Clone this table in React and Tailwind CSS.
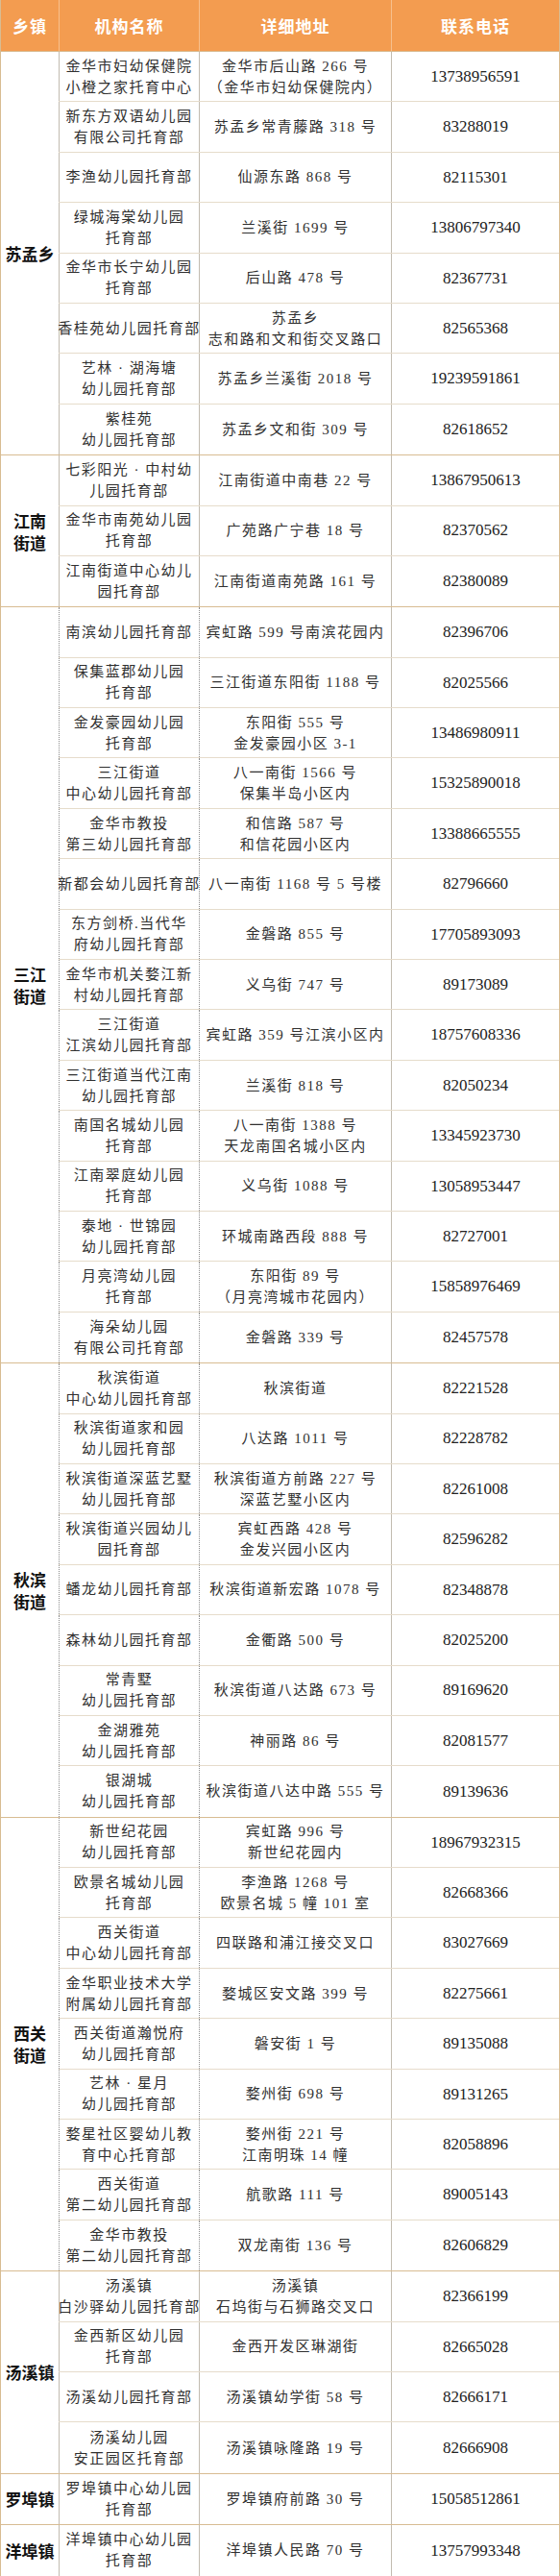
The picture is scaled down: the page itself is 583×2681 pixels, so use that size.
import React from "react";

const groups = [
  {
    town: ["苏孟乡"],
    dotted: false,
    rows: [
      [["金华市妇幼保健院", "小橙之家托育中心"], ["金华市后山路 266 号", "（金华市妇幼保健院内）"], "13738956591"],
      [["新东方双语幼儿园", "有限公司托育部"], ["苏孟乡常青藤路 318 号"], "83288019"],
      [["李渔幼儿园托育部"], ["仙源东路 868 号"], "82115301"],
      [["绿城海棠幼儿园", "托育部"], ["兰溪街 1699 号"], "13806797340"],
      [["金华市长宁幼儿园", "托育部"], ["后山路 478 号"], "82367731"],
      [["香桂苑幼儿园托育部"], ["苏孟乡", "志和路和文和街交叉路口"], "82565368"],
      [["艺林 · 湖海塘", "幼儿园托育部"], ["苏孟乡兰溪街 2018 号"], "19239591861"],
      [["紫桂苑", "幼儿园托育部"], ["苏孟乡文和街 309 号"], "82618652"],
    ],
  },
  {
    town: ["江南", "街道"],
    dotted: false,
    rows: [
      [["七彩阳光 · 中村幼", "儿园托育部"], ["江南街道中南巷 22 号"], "13867950613"],
      [["金华市南苑幼儿园", "托育部"], ["广苑路广宁巷 18 号"], "82370562"],
      [["江南街道中心幼儿", "园托育部"], ["江南街道南苑路 161 号"], "82380089"],
    ],
  },
  {
    town: ["三江", "街道"],
    dotted: true,
    rows: [
      [["南滨幼儿园托育部"], ["宾虹路 599 号南滨花园内"], "82396706"],
      [["保集蓝郡幼儿园", "托育部"], ["三江街道东阳街 1188 号"], "82025566"],
      [["金发豪园幼儿园", "托育部"], ["东阳街 555 号", "金发豪园小区 3-1"], "13486980911"],
      [["三江街道", "中心幼儿园托育部"], ["八一南街 1566 号", "保集半岛小区内"], "15325890018"],
      [["金华市教投", "第三幼儿园托育部"], ["和信路 587 号", "和信花园小区内"], "13388665555"],
      [["新都会幼儿园托育部"], ["八一南街 1168 号 5 号楼"], "82796660"],
      [["东方剑桥.当代华", "府幼儿园托育部"], ["金磐路 855 号"], "17705893093"],
      [["金华市机关婺江新", "村幼儿园托育部"], ["义乌街 747 号"], "89173089"],
      [["三江街道", "江滨幼儿园托育部"], ["宾虹路 359 号江滨小区内"], "18757608336"],
      [["三江街道当代江南", "幼儿园托育部"], ["兰溪街 818 号"], "82050234"],
      [["南国名城幼儿园", "托育部"], ["八一南街 1388 号", "天龙南国名城小区内"], "13345923730"],
      [["江南翠庭幼儿园", "托育部"], ["义乌街 1088 号"], "13058953447"],
      [["泰地 · 世锦园", "幼儿园托育部"], ["环城南路西段 888 号"], "82727001"],
      [["月亮湾幼儿园", "托育部"], ["东阳街 89 号", "（月亮湾城市花园内）"], "15858976469"],
      [["海朵幼儿园", "有限公司托育部"], ["金磐路 339 号"], "82457578"],
    ],
  },
  {
    town: ["秋滨", "街道"],
    dotted: true,
    rows: [
      [["秋滨街道", "中心幼儿园托育部"], ["秋滨街道"], "82221528"],
      [["秋滨街道家和园", "幼儿园托育部"], ["八达路 1011 号"], "82228782"],
      [["秋滨街道深蓝艺墅", "幼儿园托育部"], ["秋滨街道方前路 227 号", "深蓝艺墅小区内"], "82261008"],
      [["秋滨街道兴园幼儿", "园托育部"], ["宾虹西路 428 号", "金发兴园小区内"], "82596282"],
      [["蟠龙幼儿园托育部"], ["秋滨街道新宏路 1078 号"], "82348878"],
      [["森林幼儿园托育部"], ["金衢路 500 号"], "82025200"],
      [["常青墅", "幼儿园托育部"], ["秋滨街道八达路 673 号"], "89169620"],
      [["金湖雅苑", "幼儿园托育部"], ["神丽路 86 号"], "82081577"],
      [["银湖城", "幼儿园托育部"], ["秋滨街道八达中路 555 号"], "89139636"],
    ],
  },
  {
    town: ["西关", "街道"],
    dotted: true,
    rows: [
      [["新世纪花园", "幼儿园托育部"], ["宾虹路 996 号", "新世纪花园内"], "18967932315"],
      [["欧景名城幼儿园", "托育部"], ["李渔路 1268 号", "欧景名城 5 幢 101 室"], "82668366"],
      [["西关街道", "中心幼儿园托育部"], ["四联路和浦江接交叉口"], "83027669"],
      [["金华职业技术大学", "附属幼儿园托育部"], ["婺城区安文路 399 号"], "82275661"],
      [["西关街道瀚悦府", "幼儿园托育部"], ["磐安街 1 号"], "89135088"],
      [["艺林 · 星月", "幼儿园托育部"], ["婺州街 698 号"], "89131265"],
      [["婺星社区婴幼儿教", "育中心托育部"], ["婺州街 221 号", "江南明珠 14 幢"], "82058896"],
      [["西关街道", "第二幼儿园托育部"], ["航歌路 111 号"], "89005143"],
      [["金华市教投", "第二幼儿园托育部"], ["双龙南街 136 号"], "82606829"],
    ],
  },
  {
    town: ["汤溪镇"],
    dotted: false,
    rows: [
      [["汤溪镇", "白沙驿幼儿园托育部"], ["汤溪镇", "石坞街与石狮路交叉口"], "82366199"],
      [["金西新区幼儿园", "托育部"], ["金西开发区琳湖街"], "82665028"],
      [["汤溪幼儿园托育部"], ["汤溪镇幼学街 58 号"], "82666171"],
      [["汤溪幼儿园", "安正园区托育部"], ["汤溪镇咏隆路 19 号"], "82666908"],
    ],
  },
  {
    town: ["罗埠镇"],
    dotted: false,
    rows: [[["罗埠镇中心幼儿园", "托育部"], ["罗埠镇府前路 30 号"], "15058512861"]],
  },
  {
    town: ["洋埠镇"],
    dotted: false,
    rows: [[["洋埠镇中心幼儿园", "托育部"], ["洋埠镇人民路 70 号"], "13757993348"]],
  },
];

function Lines({ lines }) {
  return (
    <div className="flex flex-col items-center leading-[22px]">
      {lines.map((l, i) => (
        <span key={i} className="whitespace-nowrap">
          {l}
        </span>
      ))}
    </div>
  );
}

function Row({ row, dotted, last }) {
  const [name, addr, phone] = row;
  const vline = dotted
    ? "border-l border-dotted border-[#8c8c8c]"
    : "border-l border-[#c2bbb0]";
  return (
    <div
      className={`grid grid-cols-[146px_200px_1fr] h-[52.4px] ${
        last ? "" : "border-b border-[#e6dccb]"
      }`}
    >
      <div className={`flex items-center justify-center ${vline}`}>
        <Lines lines={name} />
      </div>
      <div className={`flex items-center justify-center ${vline}`}>
        <Lines lines={addr} />
      </div>
      <div className="flex items-center justify-center border-l border-[#c2bbb0] text-[17px] tracking-normal text-[#222]">
        {phone}
      </div>
    </div>
  );
}

export default function App() {
  const heads = ["乡镇", "机构名称", "详细地址", "联系电话"];
  return (
    <div className="w-[583px] bg-white">
      <div className="border-x border-b border-[#d8bc92]">
        {/* header */}
        <div className="grid grid-cols-[60px_146px_200px_1fr] h-[53px] bg-[#f39c50] text-white font-bold text-[17px] font-[Noto_Sans_CJK_SC,sans-serif]">
          {heads.map((h, i) => (
            <div
              key={h}
              className={`flex items-center justify-center tracking-[1px] ${
                i > 0 ? "border-l border-[#f7c08d]" : ""
              }`}
            >
              {h}
            </div>
          ))}
        </div>

        {groups.map((g) => (
          <div key={g.town.join("")} className="flex border-t border-[#d8bc92]">
            <div className="w-[60px] shrink-0 flex flex-col items-center justify-center font-bold text-[17px] leading-[23px] text-[#111] font-[Noto_Sans_CJK_SC,sans-serif]">
              {g.town.map((t) => (
                <span key={t}>{t}</span>
              ))}
            </div>
            <div className="flex-1 flex flex-col text-[15px] tracking-[1.5px] text-[#303030] font-[Liberation_Serif,Noto_Sans_CJK_SC,serif]">
              {g.rows.map((r, i) => (
                <Row key={i} row={r} dotted={g.dotted} last={i === g.rows.length - 1} />
              ))}
            </div>
          </div>
        ))}
      </div>
    </div>
  );
}
